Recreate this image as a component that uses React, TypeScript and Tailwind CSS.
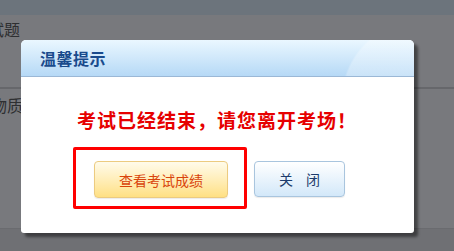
import React from "react";

export default function App() {
  return (
    <div className="relative w-[454px] h-[251px] overflow-hidden bg-[#6f7074] font-['Noto_Sans_CJK_SC','Noto_Sans',sans-serif]">
      {/* background page (dimmed) */}
      <div className="h-[15px] bg-[#6c747c]" />
      <div className="h-[72px] bg-[#78797d] pt-[6px]">
        <div className="ml-[-12px] text-[16px] leading-[16px] text-[#2e2f31]">试题</div>
      </div>
      <div className="h-[2px] bg-[#66676b]" />
      <div className="h-[139px] bg-[#78797d] pt-[8px]">
        <div className="ml-[-9px] text-[16px] leading-[16px] text-[#2e2f31]">物质</div>
      </div>
      <div className="h-[1px] bg-[#6a6b6f]" />

      {/* dialog */}
      <div className="absolute left-[21px] top-[40px] w-[393px] h-[193px] bg-white rounded-t-[5px] rounded-b-[3px] shadow-[4px_4px_3px_rgba(0,0,0,0.45)]">
        <div className="relative h-[37px] rounded-t-[5px] border-b border-[#9bb8d6] bg-gradient-to-b from-[#eaf7ff] to-[#b6d9f6] overflow-hidden flex items-center pl-[19px]">
          <div className="absolute inset-0 bg-[radial-gradient(circle_80px_at_400px_60px,rgba(255,255,255,0.28)_0,rgba(255,255,255,0.28)_78px,transparent_80px)]" />
          <span className="relative text-[16px] leading-none tracking-[0.5px] font-bold text-[#1a4b8d]">温馨提示</span>
        </div>
        <div className="mt-[33px] pl-[56px] text-[19px] leading-[20px] tracking-[1px] font-bold text-[#e60000] whitespace-nowrap">
          考试已经结束，请您离开考场！
        </div>
        <div className="mt-[31px] pl-[73px] flex items-start gap-[26px]">
          <button className="w-[134px] h-[37px] rounded-[4px] border border-[#eccb80] bg-gradient-to-b from-[#fffbea] to-[#ffe083] text-[14px] leading-none text-[#d9430b] shadow-[0_1px_1px_rgba(0,0,0,0.08)]">
            查看考试成绩
          </button>
          <button className="w-[91px] h-[36px] rounded-[4px] border border-[#a9c5de] bg-gradient-to-b from-[#ffffff] to-[#d3e8f9] text-[14px] leading-none text-[#1c3c6c] flex items-center justify-center gap-[13px] shadow-[0_1px_1px_rgba(0,0,0,0.08)]">
            <span>关</span>
            <span>闭</span>
          </button>
        </div>
        <div className="absolute left-[52px] top-[107px] w-[174px] h-[62px] border-[3px] border-[#ff0000] rounded-[2px]" />
      </div>
    </div>
  );
}
